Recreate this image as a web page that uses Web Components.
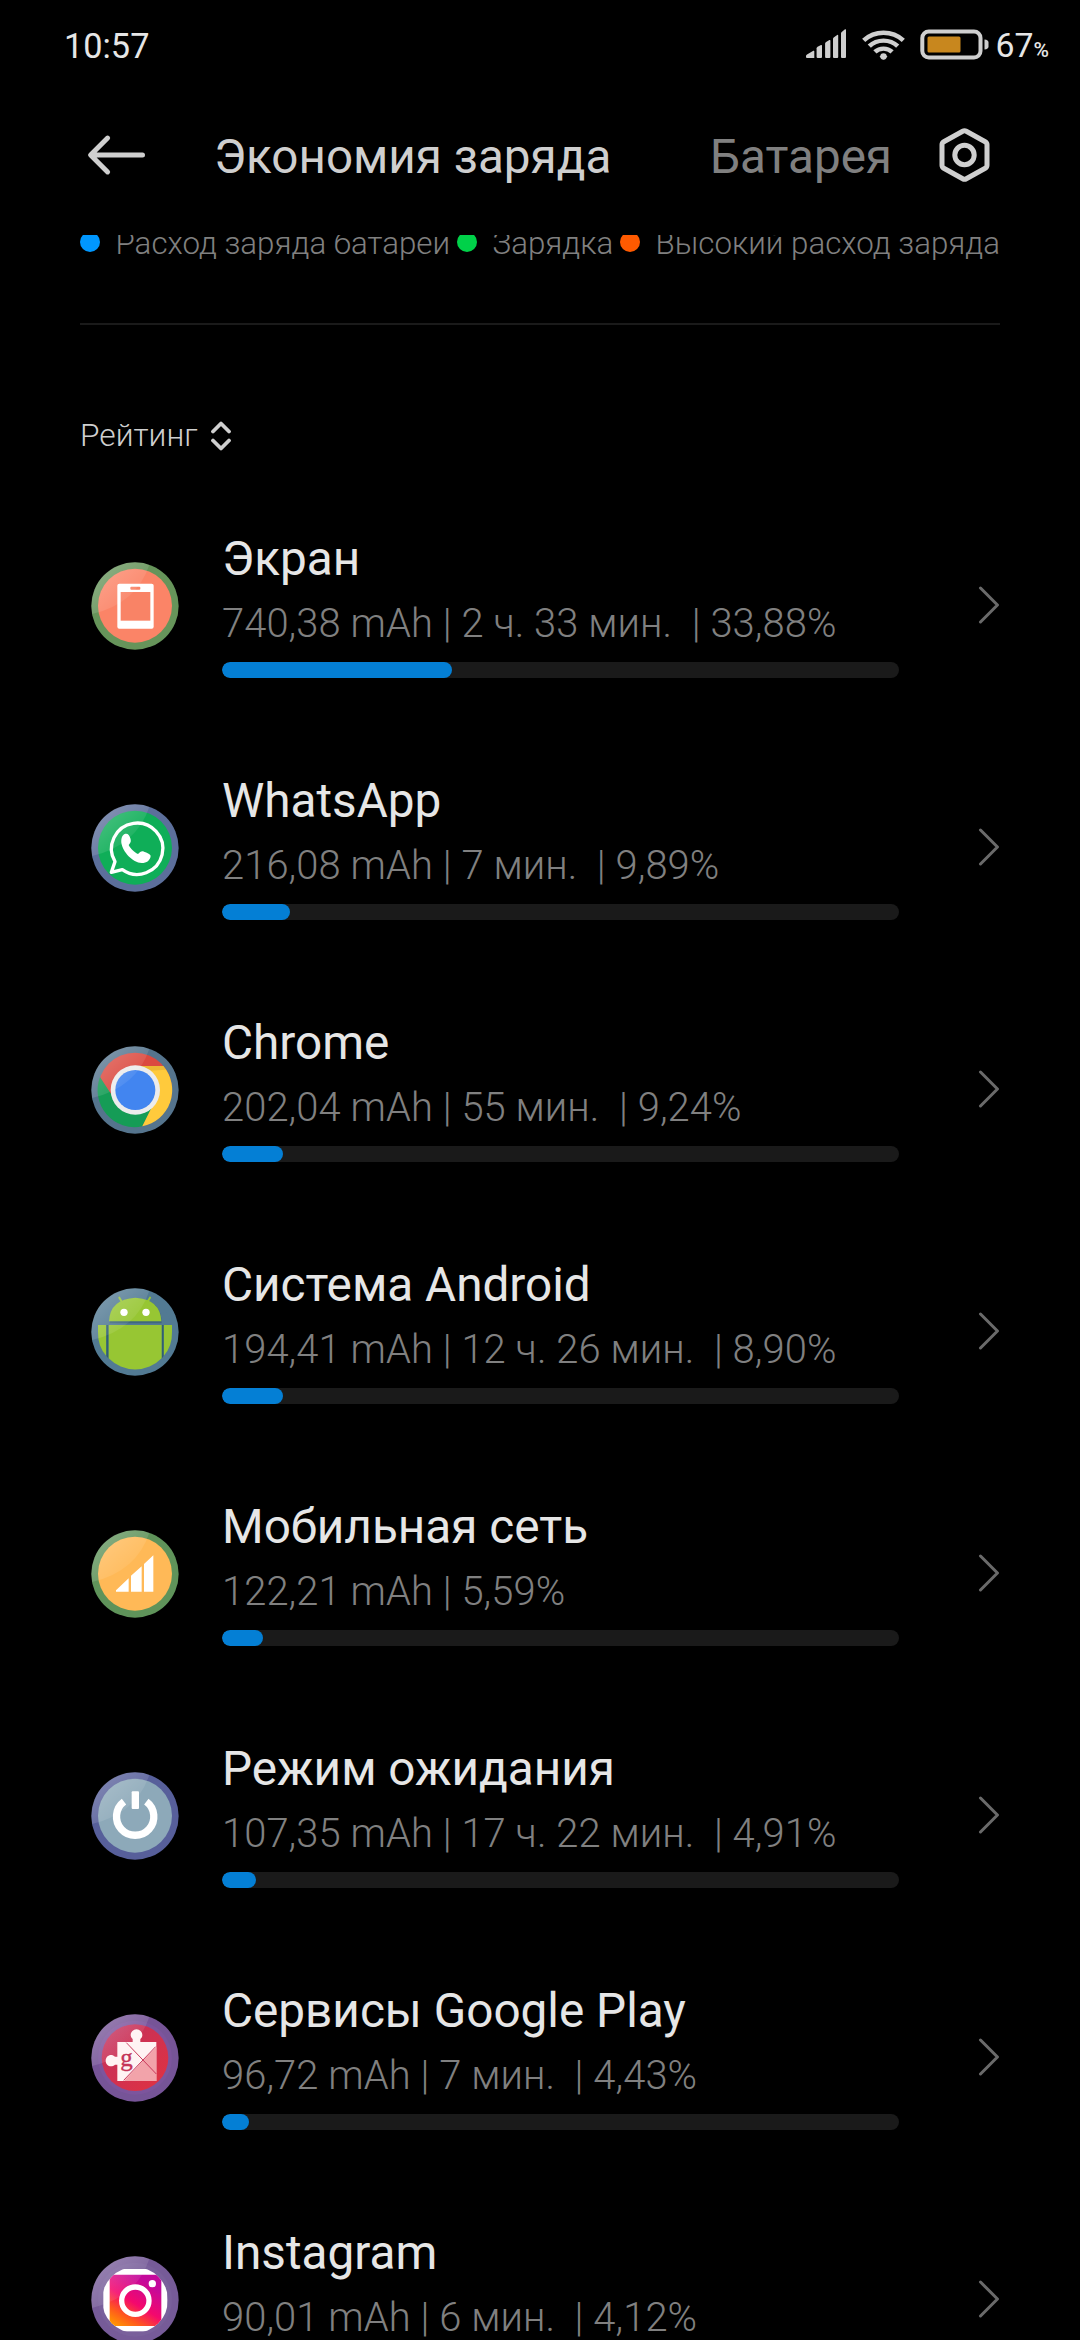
<!DOCTYPE html>
<html lang="ru">
<head>
<meta charset="utf-8">
<title>Экономия заряда</title>
<style>
  html, body { margin: 0; background: #000; }
  body {
    width: 1080px;
    height: 2340px;
    overflow: hidden;
    font-family: Roboto, "Noto Sans", sans-serif;
    color: #e6e6e6;
  }
</style>
</head>
<body>
<battery-screen>
  <status-bar slot="status" time="10:57" level="67"></status-bar>
  <page-header slot="header">
    <span slot="active">Экономия заряда</span>
    <span slot="other">Батарея</span>
  </page-header>
  <chart-legend>
    <legend-item color="#0097ff">Расход заряда батареи</legend-item>
    <legend-item color="#00d149">Зарядка</legend-item>
    <legend-item color="#ff5a00">Высокий расход заряда</legend-item>
  </chart-legend>
  <sort-toggle>Рейтинг</sort-toggle>
  <usage-list></usage-list>
</battery-screen>

<script>
// ============================================================
// Battery usage screen
// ============================================================

class BaseElement extends HTMLElement {
  constructor() {
    super();
    this.attachShadow({ mode: "open" });
  }

  connectedCallback() {
    this.shadowRoot.innerHTML = this.template();
  }
}

class BatteryScreen extends BaseElement {
  template() {
    return `
      <style>
        :host { display: flex; flex-direction: column; height: 2340px; overflow: hidden; background: #000; }
        main { flex: 1; min-height: 0; overflow: hidden; padding: 0 80px; }
      </style>
      <slot name="status"></slot>
      <slot name="header"></slot>
      <main><slot></slot></main>
    `;
  }
}

class StatusBar extends BaseElement {
  template() {
    return `
      <style>
        :host {
          display: flex;
          align-items: center;
          box-sizing: border-box;
          height: 78px;
          padding: 10px 31px 0 64px;
        }
        .time { font-size: 34.3px; line-height: 40px; flex: 1; margin-top: 3px; }
        svg { display: block; }
        .signal { margin-right: 15px; }
        .wifi { margin-right: 15px; }
        .battery { margin-right: 7px; }
        .level { display: flex; align-items: baseline; font-size: 33.8px; line-height: 40px; margin-top: 3px; }
        .level small { font-size: 21px; font-weight: 500; line-height: 24px; }
      </style>
      <div class="time">${this.getAttribute("time")}</div>
      <svg class="signal" width="41" height="30" viewBox="806 30 41 31" preserveAspectRatio="none" fill="#cfcfcf">
        <path d="M806 58q0-1 1-1.600L813.300 52.500q1-.4 1 .5V60H807q-1 0-1-1z"/>
        <path d="M816.600 50q0-1 1-1.600L821 46.600q1-.4 1 .5V59q0 1-1 1h-3.400q-1 0-1-1z"/>
        <path d="M825.100 45q0-1 1-1.600L829.400 41.400q1-.4 1 .5V59q0 1-1 1h-3.300q-1 0-1-1z"/>
        <path d="M833 40q0-1 1-1.600L837.200 36.100q1-.4 1 .5V59q0 1-1 1H834q-1 0-1-1z"/>
        <path d="M841 34.500q0-1 1-1.600L845 30.300q1-.4 1 .5V59q0 1-1 1h-3q-1 0-1-1z"/>
      </svg>
      <svg class="wifi" width="43" height="31" viewBox="861.500 29.500 43 32" preserveAspectRatio="none" fill="none" stroke="#cfcfcf" stroke-width="4.600">
        <path d="M863.200 41.200a29 29 0 0 1 39.600 0"/>
        <path d="M868.800 47.200a20.500 20.500 0 0 1 28.400 0"/>
        <path d="M874.400 53.200a12.500 12.500 0 0 1 17.200 0"/>
        <path d="M879 58q4-3.800 8 0L883 61.300z" fill="#cfcfcf" stroke="none"/>
        <circle cx="883" cy="57.800" r="3.200" fill="#cfcfcf" stroke="none"/>
      </svg>
      <svg class="battery" width="69" height="31" viewBox="919.500 29.500 69 31">
        <rect x="921.800" y="32" width="58.200" height="26" rx="6.500" fill="none" stroke="#cfcfcf" stroke-width="4"/>
        <rect x="927" y="37" width="33" height="16" rx="1.500" fill="#c8871e"/>
        <path d="M984 40q4 .3 4 3v4q0 2.700-4 3z" fill="#cfcfcf"/>
      </svg>
      <div class="level">${this.getAttribute("level")}<small>%</small></div>
    `;
  }
}

class PageHeader extends BaseElement {
  template() {
    return `
      <style>
        :host {
          display: flex;
          align-items: center;
          box-sizing: border-box;
          height: 157px;
          padding: 0 90px 0 87px;
          background: #000;
          color: #cfcfcf;
          font-size: 47.6px;
          line-height: 60px;
          white-space: nowrap;
        }
        svg { display: block; flex: none; margin-top: -3px; }
        .active { margin-left: 68px; flex: 1; }
        .other { color: #808080; margin-right: 47px; }
      </style>
      <svg width="59" height="42" viewBox="87 139.500 59 42" fill="none" stroke="#cfcfcf" stroke-width="5" stroke-linecap="round" stroke-linejoin="round">
        <path d="M142.500 160.500H91M107.600 143.600L90.600 160.500l17 16.900"/>
      </svg>
      <div class="active"><slot name="active"></slot></div>
      <div class="other"><slot name="other"></slot></div>
      <svg width="51" height="58" viewBox="938.500 131 51 58" fill="none" stroke="#cfcfcf" stroke-width="5" stroke-linejoin="round">
        <path d="M962.200 136.200q1.800-1 3.600 0l18.900 10.600q1.800 1 1.800 3v20.400q0 2-1.800 3l-18.900 10.600q-1.800 1-3.600 0l-18.900-10.600q-1.800-1-1.800-3v-20.400q0-2 1.800-3z"/>
        <circle cx="964" cy="160" r="9.700"/>
      </svg>
    `;
  }
}

class ChartLegend extends BaseElement {
  template() {
    return `
      <style>
        /* scrolled partly under the header */
        :host {
          display: flex;
          justify-content: space-between;
          margin-top: -13px;
          padding-bottom: 61px;
          border-bottom: 2px solid #1a1a1a;
        }
      </style>
      <slot></slot>
    `;
  }
}

class LegendItem extends BaseElement {
  template() {
    return `
      <style>
        :host {
          display: flex;
          align-items: center;
          height: 40px;
          font-size: 31.3px;
          font-weight: 340;
          line-height: 36px;
          color: #808080;
          white-space: nowrap;
        }
        i { width: 20px; height: 20px; border-radius: 50%; margin-right: 15.5px; background: ${this.getAttribute("color")}; }
        span { padding-top: 3px; }
      </style>
      <i></i><span><slot></slot></span>
    `;
  }
}

class SortToggle extends BaseElement {
  template() {
    return `
      <style>
        :host {
          display: flex;
          align-items: center;
          height: 40px;
          margin-top: 91px;
          font-size: 31.7px;
          font-weight: 340;
          line-height: 40px;
          color: #cfcfcf;
        }
        svg { margin-left: 12px; }
      </style>
      <slot></slot>
      <svg width="22" height="30" viewBox="0 0 22 30" fill="none" stroke="#cfcfcf" stroke-width="3.800" stroke-linecap="round" stroke-linejoin="round">
        <path d="M3 10.500l8-8 8 8M3 19.500l8 8 8-8"/>
      </svg>
    `;
  }
}

// Glyphs share one coordinate system: disc centre 165,168, ring radius 131, face radius 111
const ICONS = {
  screen: {
    ring: "#66945a", face: "#fb8467",
    art: `
      <rect x="112" y="101" width="109" height="135" rx="6" fill="#fff"/>
      <rect x="122" y="126" width="89" height="86" fill="#f98366"/>
      <rect x="151" y="110" width="30" height="9" rx="3" fill="#f98366"/>`,
  },
  whatsapp: {
    ring: "#5c6f9b", face: "#0fae58",
    art: `
      <path d="M94 241l11-32A77 77 0 1 1 127 233z" fill="none" stroke="#fff" stroke-width="10" stroke-linejoin="round"/>
      <path d="M134 126c9-3 14 3 17 13 2 7 3 12-5 20 8 14 15 20 28 27 6-5 10-10 18-7 9 3 18 7 20 12-1 14-12 22-27 22-27-2-57-33-61-61-1-13 3-23 10-26z" fill="#fff"/>`,
  },
  chrome: {
    ring: "#55748d", face: "#db4a40",
    art: `
      <path d="M60 129A111 111 0 0 0 187 277L234 190 165 168 99 189z" fill="#159c56"/>
      <path d="M187 277A111 111 0 0 0 250 96H165L230 190z" fill="#ffca3c"/>
      <path d="M165 96h85l8 11-70 5z" fill="#c99a25" opacity=".35"/>
      <circle cx="166" cy="168" r="74" fill="#ececec"/>
      <circle cx="166" cy="168" r="60" fill="#4285f0"/>`,
  },
  android: {
    ring: "#527a93", face: "#527a93",
    art: `
      <path d="M89 142q0-72 77-75 79 3 79 75z" fill="#345b70" opacity=".6"/>
      <path d="M87 136q3-67 79-71 75 4 78 71z" fill="#97c633"/>
      <path d="M118 65l10 17M210 65l-10 17" stroke="#97c633" stroke-width="6" stroke-linecap="round"/>
      <circle cx="132" cy="109" r="11" fill="#fff"/>
      <circle cx="198" cy="109" r="11" fill="#fff"/>
      <path d="M54 147h25v93Q53 211 54 168zM251 147h25v21q1 43-25 72z" fill="#97c633"/>
      <path d="M79 147h7v101l-7-8zM245 147h6v93l-6 8z" fill="#315f72"/>
      <path d="M86 147h159v100a111 111 0 0 1-159 0z" fill="#97c633"/>`,
  },
  network: {
    ring: "#5f935a", face: "#ffb957",
    art: `<path d="M108 221v-4l38-36v40zM153 221v-48l32-28v76zM192 221v-83l28-26v109z" fill="#fff"/>`,
  },
  standby: {
    ring: "#575f9a", face: "#8da9b9",
    art: `
      <path d="M132 125a56 56 0 1 0 67 0" fill="none" stroke="#fff" stroke-width="22"/>
      <rect x="155" y="94" width="22" height="53" rx="3" fill="#fff"/>`,
  },
  play: {
    ring: "#765497", face: "#7c559d",
    art: `
      <circle cx="165" cy="167" r="100" fill="url(#pg)"/>
      <path d="M112 120h46V111c-5-4-6-9-6-12a17 17 0 0 1 35 0c0 4-1 8-6 12v9h48v117H112v-49h-7c-12 11-28 2-28-12s16-23 28-12h7z" fill="#fff3f3"/>
      <path d="M190 175l39-40v82zM190 175l39 42v20h-97z" fill="#f2a3aa"/>
      <path d="M139 122l90 94M227 134l-96 101" stroke="#c9385a" stroke-width="3"/>
      <text x="121" y="193" font-family="Liberation Serif, serif" font-size="75" fill="#c43558" stroke="#c43558" stroke-width="1">g</text>`,
  },
  instagram: {
    ring: "#765b98", face: "#79609b",
    art: `
      <clipPath id="ic"><circle cx="165" cy="168" r="99"/></clipPath>
      <g clip-path="url(#ic)">
        <rect x="70" y="75" width="192" height="187" fill="#fff"/>
        <rect x="89" y="92" width="155" height="154" rx="13" fill="url(#ig)"/>
      </g>
      <circle cx="166" cy="170" r="41" fill="none" stroke="#fff" stroke-width="16"/>
      <circle cx="217" cy="119" r="11" fill="#fff"/>`,
  },
};

class AppIcon extends BaseElement {
  template() {
    const { ring, face, art } = ICONS[this.getAttribute("name")];
    return `
      <style>
        :host { display: block; width: 88px; height: 88px; }
        svg { display: block; }
      </style>
      <svg width="88" height="88" viewBox="33 36 264 264">
        <defs>
          <linearGradient id="pg" x1="0" y1="0" x2="1" y2="1">
            <stop offset="0" stop-color="#c0305f"/><stop offset="1" stop-color="#e13240"/>
          </linearGradient>
          <linearGradient id="ig" x1=".1" y1="1" x2=".65" y2=".1">
            <stop offset="0" stop-color="#ff9a00"/><stop offset=".25" stop-color="#ff5a1c"/>
            <stop offset=".55" stop-color="#f4086d"/><stop offset="1" stop-color="#c4099b"/>
          </linearGradient>
          <linearGradient id="gloss" x1=".15" y1=".15" x2=".7" y2=".7">
            <stop offset="0" stop-color="#fff" stop-opacity=".24"/>
            <stop offset="1" stop-color="#fff" stop-opacity=".06"/>
          </linearGradient>
        </defs>
        <circle cx="165" cy="168" r="131" fill="${ring}"/>
        <circle cx="165" cy="167" r="111" fill="${face}"/>
        ${art}
        <path d="M36 192Q170 160 208 44A131 131 0 0 0 36 192z" fill="url(#gloss)"/>
      </svg>
    `;
  }
}

class UsageRow extends BaseElement {
  template() {
    return `
      <style>
        :host {
          display: flex;
          align-items: center;
          height: 242px;
          padding-left: 11px;
        }
        .body { width: 678px; margin-left: 43px; padding-bottom: 3px; white-space: pre; }
        .name { font-size: 47.7px; line-height: 56px; }
        .info { font-size: 39.9px; font-weight: 340; line-height: 64px; color: #808080; margin: 5px 0 6px; letter-spacing: 0.07px; }
        .track { height: 16px; border-radius: 8px; background: #1a1a1a; overflow: hidden; }
        .fill { height: 16px; border-radius: 8px; background: #047fd5; width: ${this.getAttribute("progress")}%; }
        svg { margin: -3px 0 0 79.5px; }
      </style>
      <app-icon name="${this.getAttribute("icon")}"></app-icon>
      <div class="body"><div class="name"><slot></slot></div><div class="info">${this.getAttribute("info")}</div><div class="track"><div class="fill"></div></div></div>
      <svg width="22" height="38" viewBox="0 0 22 38" fill="none" stroke="#6a6a6a" stroke-width="3" stroke-linecap="round" stroke-linejoin="round">
        <path d="M2.500 2L19.500 19 2.500 36"/>
      </svg>
    `;
  }
}

// progress is rounded to whole percents
const USAGE = [
  ["screen", "Экран", "740,38 mAh | 2 ч. 33 мин.  | 33,88%", 34],
  ["whatsapp", "WhatsApp", "216,08 mAh | 7 мин.  | 9,89%", 10],
  ["chrome", "Chrome", "202,04 mAh | 55 мин.  | 9,24%", 9],
  ["android", "Система Android", "194,41 mAh | 12 ч. 26 мин.  | 8,90%", 9],
  ["network", "Мобильная сеть", "122,21 mAh | 5,59%", 6],
  ["standby", "Режим ожидания", "107,35 mAh | 17 ч. 22 мин.  | 4,91%", 5],
  ["play", "Сервисы Google Play", "96,72 mAh | 7 мин.  | 4,43%", 4],
  ["instagram", "Instagram", "90,01 mAh | 6 мин.  | 4,12%", 4],
];

class UsageList extends BaseElement {
  template() {
    return `
      <style>:host { display: block; margin-top: 29px; }</style>
      ${USAGE.map(
        ([icon, name, info, progress]) =>
          `<usage-row icon="${icon}" info="${info}" progress="${progress}">${name}</usage-row>`
      ).join("")}
    `;
  }
}

customElements.define("app-icon", AppIcon);
customElements.define("usage-row", UsageRow);
customElements.define("usage-list", UsageList);
customElements.define("sort-toggle", SortToggle);
customElements.define("legend-item", LegendItem);
customElements.define("chart-legend", ChartLegend);
customElements.define("page-header", PageHeader);
customElements.define("status-bar", StatusBar);
customElements.define("battery-screen", BatteryScreen);
</script>
</body>
</html>
